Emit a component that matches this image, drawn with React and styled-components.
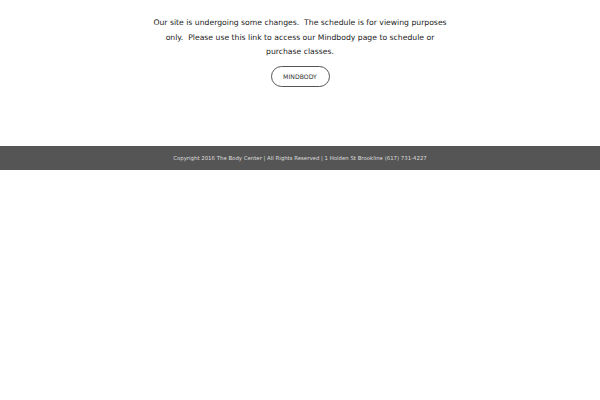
import React from 'react';
import styled, { createGlobalStyle } from 'styled-components';

const Global = createGlobalStyle`
	body {
		margin: 0;
		background: #fff;
		font-family: "DejaVu Sans", Verdana, sans-serif;
	}
`;

export default function App() {
	return (
		<>
			<Global />
			<Notice>
				<p>
					Our site is undergoing some changes.&nbsp; The schedule is for viewing purposes
					<br />
					only.&nbsp; Please use this link to access our Mindbody page to schedule or
					<br />
					purchase classes.
				</p>
				<PillButton href="#">MINDBODY</PillButton>
			</Notice>
			<Footer>
				Copyright 2016 The Body Center | All Rights Reserved | 1 Holden St Brookline (617) 731-4227
			</Footer>
		</>
	);
}

const Notice = styled.section`
	display: flex;
	flex-direction: column;
	align-items: center;
	padding-top: 16px;
	height: 146px;
	box-sizing: border-box;

	p {
		margin: 0;
		font-size: 7.7px;
		line-height: 14.5px;
		color: #222;
		text-align: center;
	}
`;

const PillButton = styled.a`
	display: flex;
	align-items: center;
	justify-content: center;
	margin-top: 6px;
	width: 59px;
	height: 21px;
	box-sizing: border-box;
	border: 1px solid #555;
	border-radius: 11px;
	font-size: 6.2px;
	color: #333;
	text-decoration: none;
`;

const Footer = styled.footer`
	background: #555;
	height: 24px;
	display: flex;
	align-items: center;
	justify-content: center;
	font-size: 5.4px;
	color: #ddd;
`;
